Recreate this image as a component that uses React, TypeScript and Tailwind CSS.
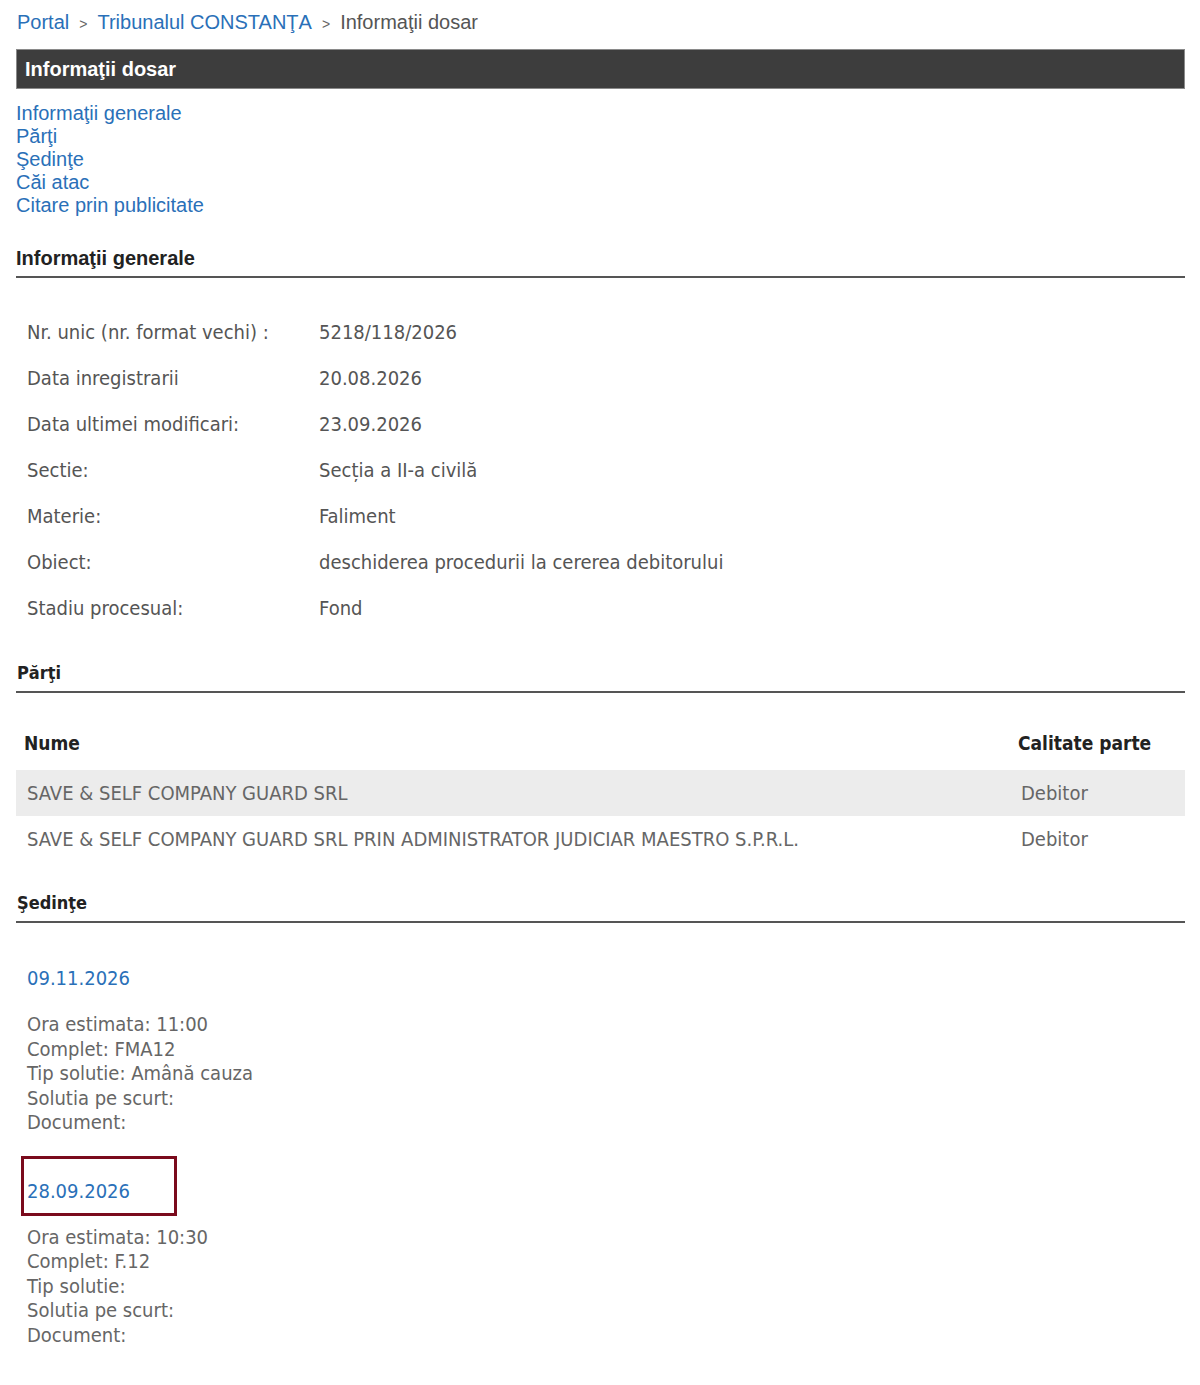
import React from "react";

const sans = "font-['Liberation_Sans',Arial,sans-serif]";
const cond = "font-['DejaVu_Sans_Condensed','DejaVu_Sans',Tahoma,sans-serif]";

const info: [string, string][] = [
  ["Nr. unic (nr. format vechi) :", "5218/118/2026"],
  ["Data inregistrarii", "20.08.2026"],
  ["Data ultimei modificari:", "23.09.2026"],
  ["Sectie:", "Secția a II-a civilă"],
  ["Materie:", "Faliment"],
  ["Obiect:", "deschiderea procedurii la cererea debitorului"],
  ["Stadiu procesual:", "Fond"],
];

const parti: [string, string][] = [
  ["SAVE & SELF COMPANY GUARD SRL", "Debitor"],
  ["SAVE & SELF COMPANY GUARD SRL PRIN ADMINISTRATOR JUDICIAR MAESTRO S.P.R.L.", "Debitor"],
];

function SectionTitle({ children, className = "" }: { children: React.ReactNode; className?: string }) {
  return (
    <div className={`border-b-2 border-[#555] pb-[6px] ${className}`}>
      <h2 className={`${cond} text-[18px] font-bold leading-[24px] text-[#222] pl-[1px]`}>{children}</h2>
    </div>
  );
}

function Sedinta({ date, ora, complet, tip, boxed }: { date: string; ora: string; complet: string; tip: string; boxed?: boolean }) {
  return (
    <div className={`${cond} text-[20px] text-[#666]`}>
      <div
        className={
          boxed
            ? "ml-[5px] w-[156px] h-[60px] border-[3px] border-[#7a0a1c] flex items-end pb-[10px] pl-[3px]"
            : "pl-[11px]"
        }
      >
        <a className="text-[#2a70b8] leading-[24px]">{date}</a>
      </div>
      <div className={`pl-[11px] leading-[24.5px] ${boxed ? "mt-[9px]" : "mt-[19px]"}`}>
        <div>Ora estimata: {ora}</div>
        <div>Complet: {complet}</div>
        <div>Tip solutie: {tip}</div>
        <div>Solutia pe scurt:</div>
        <div>Document:</div>
      </div>
    </div>
  );
}

export default function App() {
  return (
    <div className="bg-white w-[1200px] min-h-[1385px] pl-[16px] pr-[15px] pt-[10px]">
      {/* breadcrumb */}
      <div className={`${sans} text-[20px] leading-[24px] text-[#555] pl-[1px]`}>
        <a className="text-[#2a70b8]">Portal</a>
        <span className="text-[14px] mx-[10px] text-[#666]">&gt;</span>
        <a className="text-[#2a70b8]">Tribunalul CONSTANŢA</a>
        <span className="text-[14px] mx-[10px] text-[#666]">&gt;</span>
        <span>Informaţii dosar</span>
      </div>

      {/* page title bar */}
      <div className="mt-[13px] h-[40px] bg-[#3d3d3d] border border-[#8a8a8a] flex items-center pl-[8px]">
        <h1 className={`${sans} text-[20px] font-bold text-white`}>Informaţii dosar</h1>
      </div>

      {/* anchors */}
      <nav className={`${sans} mt-[13px] text-[20px] leading-[23px] flex flex-col items-start text-[#2a70b8]`}>
        <a>Informaţii generale</a>
        <a>Părţi</a>
        <a>Şedinţe</a>
        <a>Căi atac</a>
        <a>Citare prin publicitate</a>
      </nav>

      <div className="mt-[29px] border-b-2 border-[#555] pb-[6px]">
        <h2 className={`${sans} text-[20px] font-bold leading-[24px] text-[#222]`}>Informaţii generale</h2>
      </div>

      {/* general info */}
      <div className={`${cond} text-[20px] text-[#555] mt-[39px] pl-[11px]`}>
        {info.map(([k, v]) => (
          <div key={k} className="flex h-[46px] items-start">
            <div className="w-[292px] shrink-0">{k}</div>
            <div>{v}</div>
          </div>
        ))}
      </div>

      <SectionTitle className="mt-[22px]">Părţi</SectionTitle>

      {/* parties table */}
      <div className={`${cond} mt-[23px]`}>
        <div className="flex h-[54px] items-center px-[8px] text-[19px] font-bold text-[#222]">
          <div className="flex-1">Nume</div>
          <div className="w-[159px]">Calitate parte</div>
        </div>
        {parti.map(([n, c], i) => (
          <div
            key={i}
            className={`flex h-[46px] items-center pl-[11px] text-[20px] text-[#666] ${i === 0 ? "bg-[#ececec]" : ""}`}
          >
            <div className="flex-1">{n}</div>
            <div className="w-[164px]">{c}</div>
          </div>
        ))}
      </div>

      <SectionTitle className="mt-[29px]">Şedinţe</SectionTitle>

      <div className="mt-[40px]">
        <Sedinta date="09.11.2026" ora="11:00" complet="FMA12" tip="Amână cauza" />
      </div>
      <div className="mt-[21px]">
        <Sedinta date="28.09.2026" ora="10:30" complet="F.12" tip="" boxed />
      </div>
    </div>
  );
}
